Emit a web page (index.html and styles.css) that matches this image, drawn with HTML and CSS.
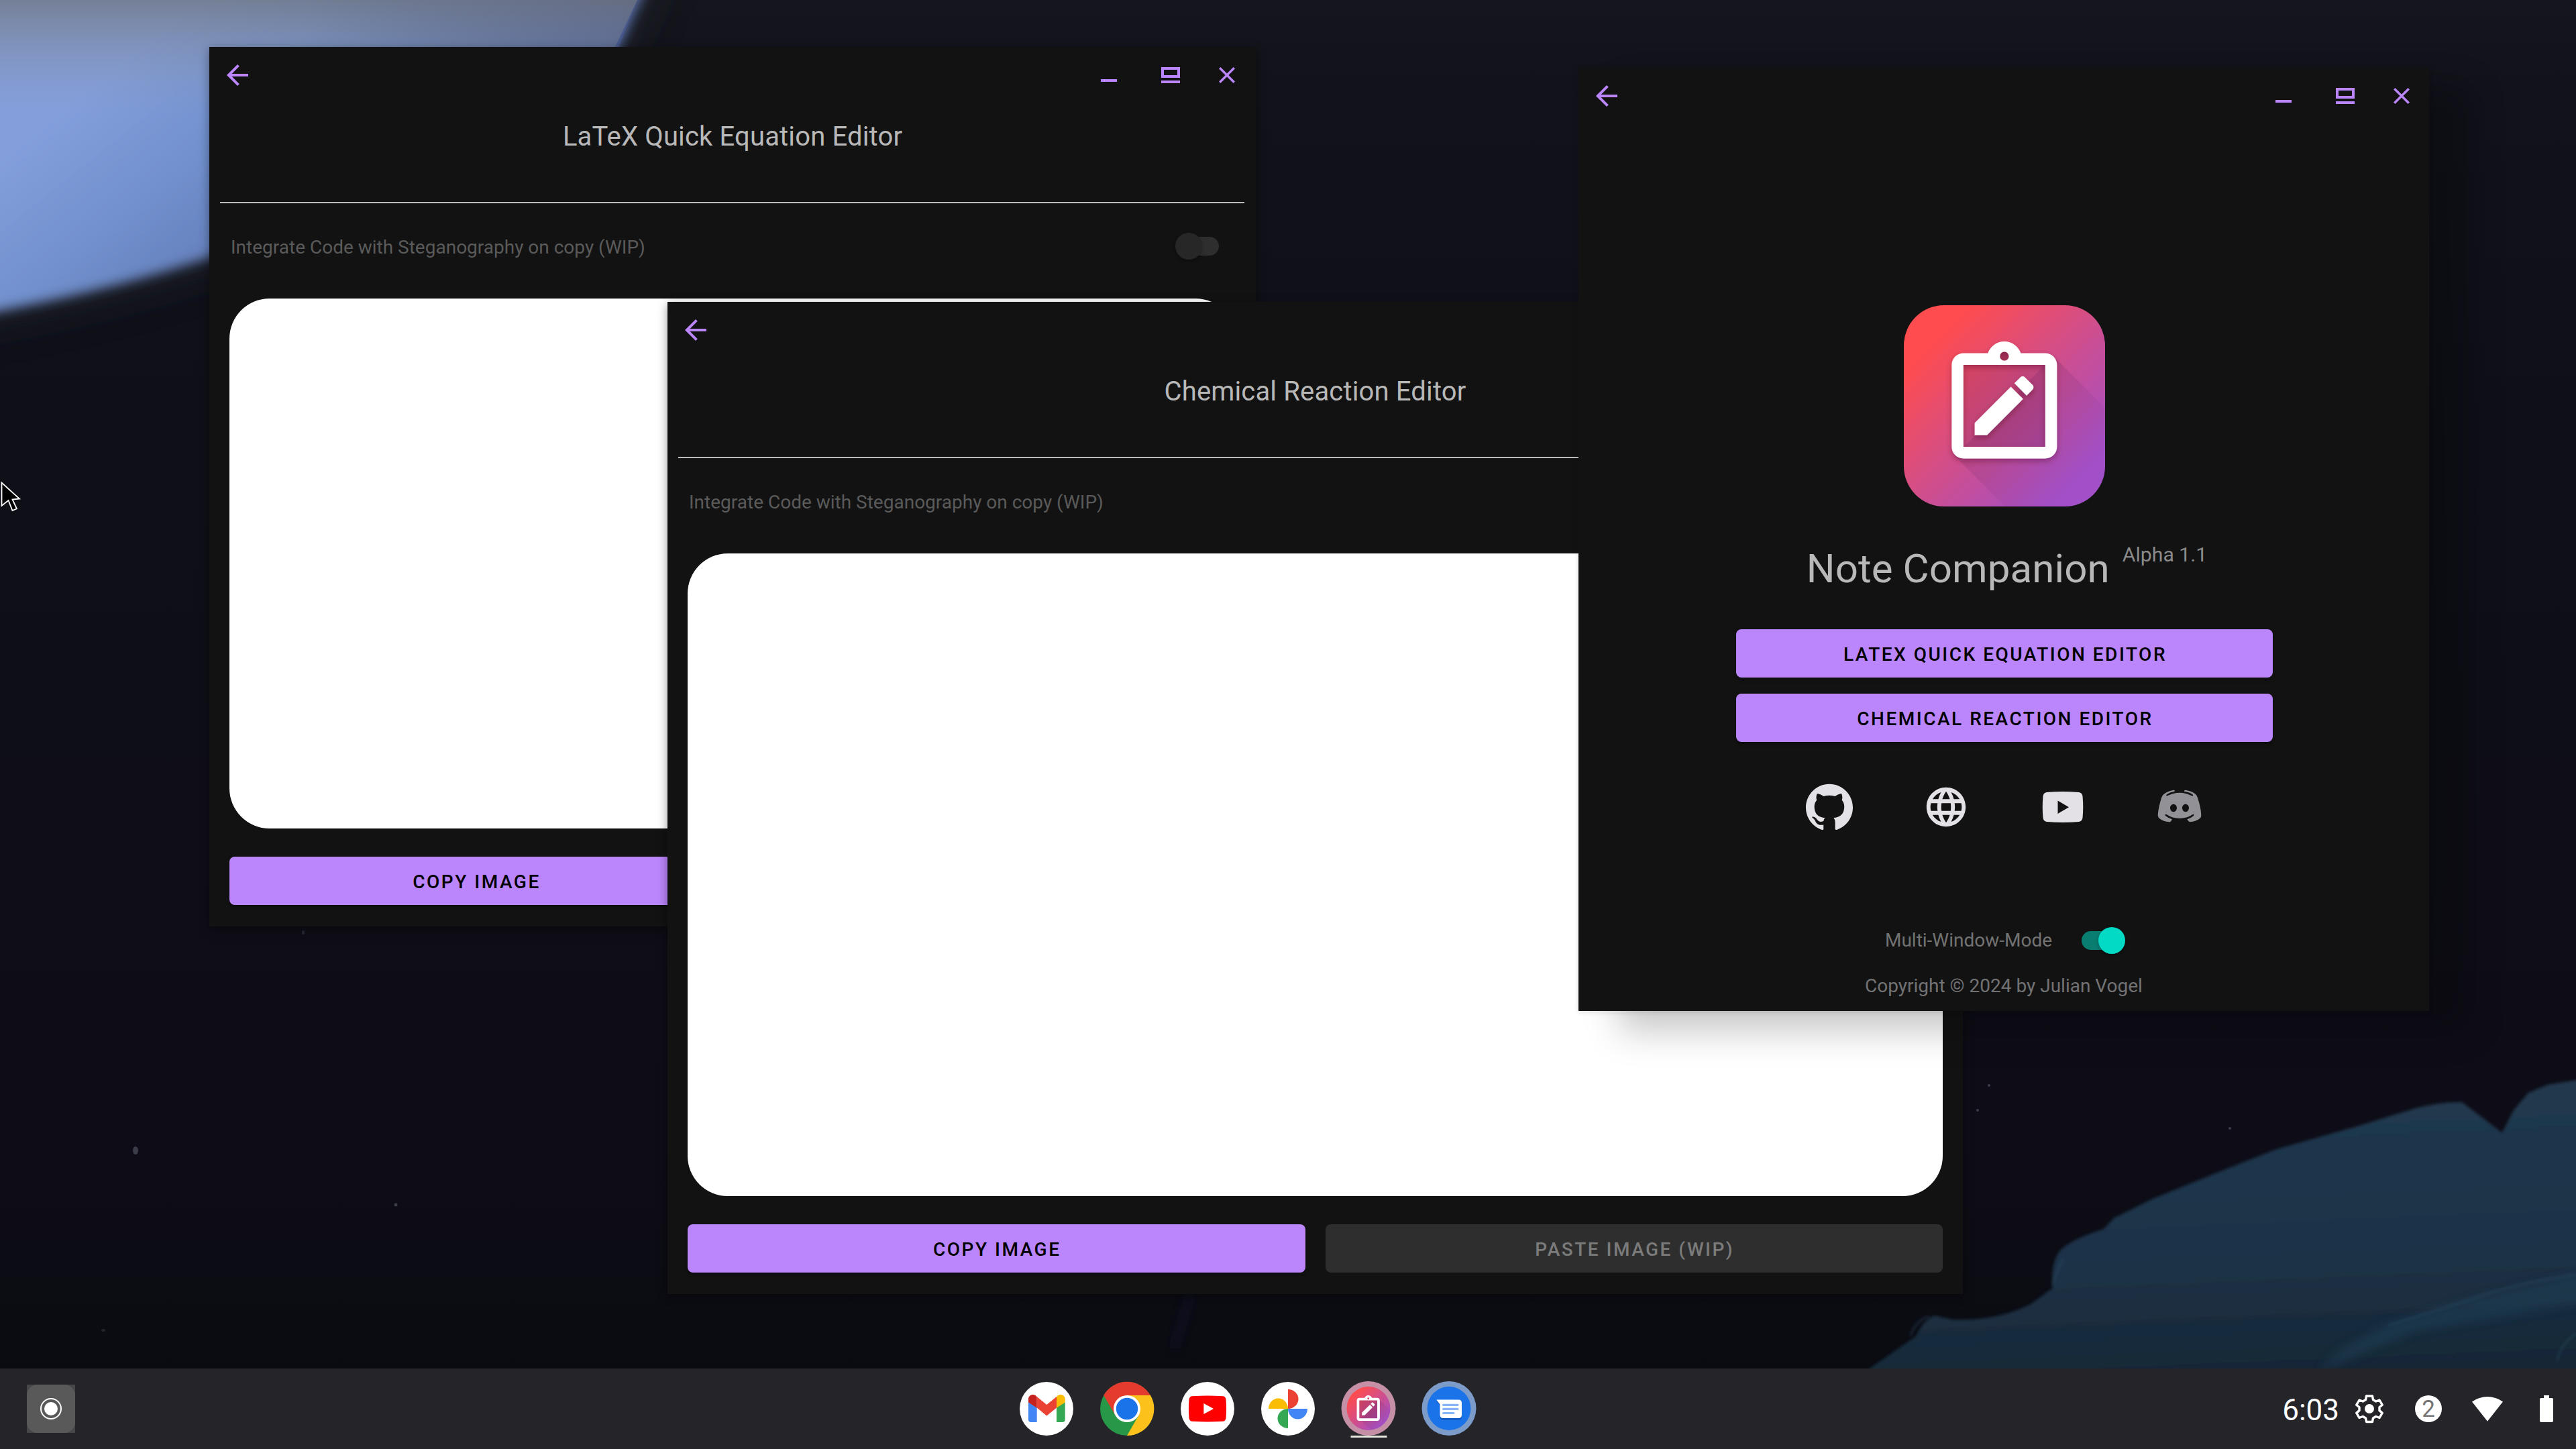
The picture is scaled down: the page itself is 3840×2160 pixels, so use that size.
FILE: index.html
```html
<!DOCTYPE html>
<html lang="en">
<head>
<meta charset="utf-8">
<title>Note Companion</title>
<link rel="stylesheet" href="styles.css">
</head>
<body>
<svg class="defs" width="0" height="0" aria-hidden="true">
  <defs>
    <linearGradient id="brand" x1="0" y1="0" x2="1" y2="1">
      <stop offset=".16" stop-color="#ff4c4e"/>
      <stop offset=".86" stop-color="#a250c8"/>
    </linearGradient>
    <linearGradient id="cast" x1="0" y1="0" x2="1" y2="1">
      <stop offset=".3" stop-color="#3c1450" stop-opacity=".15"/>
      <stop offset=".85" stop-color="#3c1450" stop-opacity="0"/>
    </linearGradient>
    <symbol id="back" viewBox="0 0 24 24"><path d="M20 11H7.83l5.59-5.59L12 4l-8 8 8 8 1.41-1.41L7.83 13H20v-2z"/></symbol>
    <symbol id="minimize" viewBox="0 0 48 48"><path d="M12 30h24v4H12z"/></symbol>
    <symbol id="maximize" viewBox="0 0 48 48"><path fill-rule="evenodd" d="M10 12h28v16H10zM14 16v8h20v-8zM10 32h28v4H10z"/></symbol>
    <symbol id="close" viewBox="0 0 28 28"><path d="M21 8.41 19.59 7 14 12.59 8.41 7 7 8.41 12.59 14 7 19.59 8.41 21 14 15.41 19.59 21 21 19.59 15.41 14z"/></symbol>
    <symbol id="clipboard" viewBox="0 0 24 24"><path fill-rule="evenodd" d="M19 3h-4.180C14.4 1.840 13.3 1 12 1S9.600 1.840 9.180 3H5c-1.100 0-2 .9-2 2v14c0 1.100.9 2 2 2h14c1.100 0 2-.9 2-2V5c0-1.100-.9-2-2-2zM12 2.750a.77.77 0 1 1 0 1.540.77.77 0 0 1 0-1.540zM19 19H5V5h14z"/></symbol>
    <symbol id="pencil" viewBox="0 0 24 24"><path d="M3 17.250V21h3.750L17.810 9.940l-3.750-3.750L3 17.250zM20.710 7.040c.39-.39.39-1.020 0-1.410l-2.340-2.340c-.39-.39-1.020-.39-1.410 0l-1.830 1.830 3.750 3.750 1.830-1.830z"/></symbol>
  </defs>
</svg>

<main class="desktop">
  <svg class="wallpaper" viewBox="0 0 3840 2160" aria-hidden="true">
    <defs>
      <linearGradient id="planet" gradientUnits="userSpaceOnUse" x1="100" y1="160" x2="420" y2="560">
        <stop offset="0" stop-color="#839edb"/>
        <stop offset=".35" stop-color="#7190cd"/>
        <stop offset="1" stop-color="#5468a4"/>
      </linearGradient>
      <linearGradient id="limb" gradientUnits="userSpaceOnUse" x1="450" y1="0" x2="960" y2="0">
        <stop offset="0" stop-color="#4c5f96" stop-opacity="0"/>
        <stop offset="1" stop-color="#46588e" stop-opacity=".85"/>
      </linearGradient>
      <linearGradient id="rock" x1=".4" y1="0" x2=".5" y2="1">
        <stop offset="0" stop-color="#21394f"/>
        <stop offset=".55" stop-color="#1d3349"/>
        <stop offset="1" stop-color="#172735"/>
      </linearGradient>
      <linearGradient id="haze" x1="0" y1="0" x2="0" y2="1">
        <stop offset="0" stop-color="#70747c" stop-opacity=".72"/>
        <stop offset="1" stop-color="#8a9ab8" stop-opacity="0"/>
      </linearGradient>
      <linearGradient id="sky" x1="0" y1="0" x2="0" y2="1">
        <stop offset="0" stop-color="#15161d"/>
        <stop offset=".06" stop-color="#11121a"/>
        <stop offset=".3" stop-color="#0f0f18"/>
        <stop offset=".8" stop-color="#0e0d17"/>
        <stop offset="1" stop-color="#090a0f"/>
      </linearGradient>
      <clipPath id="planet-clip"><path d="M0 0H955Q850 250 700 300Q500 330 312 384Q150 438 0 464z"/></clipPath>
      <filter id="soft" x="-10%" y="-10%" width="120%" height="120%"><feGaussianBlur stdDeviation="9"/></filter>
      <filter id="glow" x="-20%" y="-20%" width="140%" height="140%"><feGaussianBlur stdDeviation="30"/></filter>
      <filter id="edge"><feGaussianBlur stdDeviation="2"/></filter>
      <filter id="streak" x="-40%" y="-20%" width="180%" height="140%"><feGaussianBlur stdDeviation="7"/></filter>
    </defs>
    <rect width="3840" height="2160" fill="url(#sky)"/>
    <path d="M-90-90H1000Q890 250 700 316Q500 346 312 400Q150 454-90 494z" fill="#22262f" opacity=".7" filter="url(#glow)"/>
    <path d="M-60-60H982L945 20Q850 250 700 300Q500 330 312 384Q150 438-60 474z" fill="url(#planet)" filter="url(#soft)"/>
    <path d="M0 0H950L850 250H0z" fill="url(#limb)" clip-path="url(#planet-clip)"/>
    <path d="M0 0H950L870 170H0z" fill="url(#haze)" clip-path="url(#planet-clip)"/>
    <path filter="url(#edge)" fill="url(#rock)" d="M2787 2040L2856 1992Q2868 1966 2884 1961L2910 1967Q2976 1970 3027 1944L3060 1920Q3056 1890 3068 1868Q3080 1850 3136 1832L3151 1816L3209 1787L3318 1743L3391 1714L3514 1679L3601 1652Q3640 1642 3670 1643L3703 1668L3730 1689L3747 1655L3769 1629L3798 1617L3860 1607V2060H2780z"/>
    <path filter="url(#streak)" fill="#1f3a50" opacity=".7" d="M3456 2045L3490 2010L3558 1975L3620 1955L3703 1932L3860 1895V1940L3760 1958L3600 1985z"/>
    <path filter="url(#edge)" fill="none" stroke="#2b4f66" stroke-width="3" opacity=".45" d="M3060 1918Q3064 1898 3076 1876M2848 1992Q2854 1970 2876 1962M3560 1976Q3620 1958 3703 1930Q3760 1912 3840 1900M3812 2030Q3816 2004 3840 1988"/>
    <path filter="url(#streak)" stroke="#12153a" stroke-width="10" opacity=".45" d="M1775 1929L1750 2010"/>
    <g fill="#3a3d48">
      <ellipse cx="202" cy="1715" rx="4" ry="6"/><ellipse cx="452" cy="1390" rx="2" ry="3" opacity=".6"/>
      <ellipse cx="154" cy="1983" rx="3" ry="2" opacity=".5"/><circle cx="590" cy="1796" r="2.500"/>
      <circle cx="2965" cy="1618" r="2"/><circle cx="2948" cy="1655" r="2"/><circle cx="3324" cy="1682" r="2"/>
    </g>
  </svg>

  <section class="window window-latex">
    <header class="titlebar">
      <svg class="tool"><use href="#back"/></svg>
      <div class="controls">
        <svg class="tool"><use href="#minimize"/></svg>
        <svg class="tool maximize"><use href="#maximize"/></svg>
        <svg class="tool"><use href="#close"/></svg>
      </div>
    </header>
    <h1 class="editor-title">LaTeX Quick Equation Editor</h1>
    <hr class="divider">
    <div class="option">
      <span>Integrate Code with Steganography on copy (WIP)</span>
      <i class="switch off"></i>
    </div>
    <div class="canvas"></div>
    <div class="actions">
      <button class="btn">COPY IMAGE</button>
      <button class="btn disabled">PASTE IMAGE (WIP)</button>
    </div>
  </section>

  <section class="window window-chem">
    <header class="titlebar">
      <svg class="tool"><use href="#back"/></svg>
      <div class="controls">
        <svg class="tool"><use href="#minimize"/></svg>
        <svg class="tool maximize"><use href="#maximize"/></svg>
        <svg class="tool"><use href="#close"/></svg>
      </div>
    </header>
    <h1 class="editor-title">Chemical Reaction Editor</h1>
    <hr class="divider">
    <div class="option">
      <span>Integrate Code with Steganography on copy (WIP)</span>
      <i class="switch off"></i>
    </div>
    <div class="canvas"></div>
    <div class="actions">
      <button class="btn">COPY IMAGE</button>
      <button class="btn disabled">PASTE IMAGE (WIP)</button>
    </div>
  </section>

  <section class="window window-home">
    <header class="titlebar">
      <svg class="tool"><use href="#back"/></svg>
      <div class="controls">
        <svg class="tool"><use href="#minimize"/></svg>
        <svg class="tool maximize"><use href="#maximize"/></svg>
        <svg class="tool"><use href="#close"/></svg>
      </div>
    </header>
    <svg class="logo" viewBox="0 0 300 300">
      <defs>
        <clipPath id="tile"><rect width="300" height="300" rx="60"/></clipPath>
        <filter id="drop" x="-20%" y="-20%" width="140%" height="150%"><feDropShadow dx="0" dy="4" stdDeviation="4" flood-color="#400020" flood-opacity=".35"/></filter>
      </defs>
      <rect width="300" height="300" rx="60" fill="url(#brand)"/>
      <path clip-path="url(#tile)" d="M76 225L151 300H300V153L223 76z" fill="url(#cast)"/>
      <path d="M85 85H217V215H85z" fill="#5a1440" opacity=".15"/>
      <circle cx="150" cy="76" r="9" fill="#5a1440" opacity=".4"/>
      <g fill="#fff" filter="url(#drop)">
        <use href="#clipboard" x="45.200" y="45.300" width="209.300" height="209.300"/>
        <use href="#pencil" x="91" y="91.400" width="117" height="117"/>
      </g>
    </svg>
    <div class="brand"><h1 class="brand-name">Note Companion</h1><span class="version">Alpha 1.1</span></div>
    <nav class="menu">
      <button class="btn">LATEX QUICK EQUATION EDITOR</button>
      <button class="btn">CHEMICAL REACTION EDITOR</button>
    </nav>
    <div class="links">
      <svg viewBox="0 0 24 24"><path d="M12 .297c-6.630 0-12 5.373-12 12 0 5.303 3.438 9.800 8.205 11.385.6.113.82-.258.82-.577 0-.285-.01-1.040-.015-2.040-3.338.724-4.042-1.610-4.042-1.610C4.422 18.070 3.633 17.700 3.633 17.700c-1.087-.744.084-.729.084-.729 1.205.084 1.838 1.236 1.838 1.236 1.070 1.835 2.809 1.305 3.495.998.108-.776.417-1.305.76-1.605-2.665-.3-5.466-1.332-5.466-5.930 0-1.310.465-2.380 1.235-3.220-.135-.303-.54-1.523.105-3.176 0 0 1.005-.322 3.300 1.230.96-.267 1.980-.399 3-.405 1.020.006 2.040.138 3 .405 2.280-1.552 3.285-1.230 3.285-1.230.645 1.653.24 2.873.12 3.176.765.84 1.230 1.910 1.230 3.220 0 4.610-2.805 5.625-5.475 5.920.42.36.81 1.096.81 2.220 0 1.606-.015 2.896-.015 3.286 0 .315.21.69.825.57C20.565 22.092 24 17.592 24 12.297c0-6.627-5.373-12-12-12"/></svg>
      <svg viewBox="0 0 24 24"><path d="M11.990 2C6.470 2 2 6.480 2 12s4.470 10 9.990 10C17.520 22 22 17.520 22 12S17.520 2 11.990 2zm6.930 6h-2.950c-.32-1.250-.78-2.450-1.380-3.560 1.840.63 3.370 1.910 4.330 3.560zM12 4.040c.83 1.200 1.480 2.530 1.910 3.960h-3.820c.43-1.430 1.080-2.760 1.910-3.960zM4.260 14C4.100 13.360 4 12.690 4 12s.1-1.360.26-2h3.380c-.08.66-.14 1.320-.14 2s.06 1.340.14 2H4.260zm.82 2h2.950c.32 1.250.78 2.450 1.380 3.560-1.840-.63-3.370-1.900-4.330-3.560zm2.950-8H5.080c.96-1.660 2.490-2.930 4.330-3.560C8.810 5.550 8.350 6.750 8.030 8zM12 19.960c-.83-1.200-1.480-2.530-1.910-3.960h3.820c-.43 1.430-1.080 2.760-1.910 3.960zM14.340 14H9.660c-.09-.66-.16-1.320-.16-2s.07-1.350.16-2h4.680c.09.65.16 1.320.16 2s-.07 1.340-.16 2zm.25 5.560c.6-1.110 1.060-2.310 1.380-3.560h2.950c-.96 1.650-2.490 2.930-4.330 3.560zM16.360 14c.08-.66.14-1.320.14-2s-.06-1.340-.14-2h3.380c.16.64.26 1.310.26 2s-.1 1.360-.26 2h-3.380z"/></svg>
      <svg viewBox="0 0 70 70"><path fill-rule="evenodd" d="M11 13Q35 11 59 13Q64 14 64.500 19Q66 35 64.500 51Q64 56 59 57Q35 59 11 57Q6 56 5.500 51Q4 35 5.500 19Q6 14 11 13zM27.500 25.500V45L44 35.200z"/></svg>
      <svg class="muted" viewBox="42 24 210 210">
        <path fill-rule="evenodd" d="M92 79Q119 65 147 65Q176 65 202 79Q206 81 207 78Q208 75 205 73Q192 63 171 60Q166 59 168 56Q169 53 174 53Q202 57 219 72Q224 76 228 88Q243 134 244 165Q245 174 238 180Q219 195 193 196Q188 195 185 190L181 184Q197 180 209 169Q213 165 211 163Q209 160 205 163Q180 180 147 180Q115 180 90 163Q86 160 83 163Q81 166 85 169Q98 180 114 184L109 192Q106 197 100 196Q75 195 57 180Q50 174 50 165Q52 134 66 88Q70 77 76 72Q95 57 120 53Q126 53 126 56Q127 59 122 60Q104 63 90 73Q86 76 88 78Q89 80 92 79zM120 116c-8.500 0-15 7.500-15 17s6.500 18 15 18 15-8 15-18-6.500-17-15-17zM174 116c-8.500 0-15 7.500-15 17s6.500 18 15 18 15-8 15-18-6.500-17-15-17z"/>
      </svg>
    </div>
    <div class="multi"><span>Multi-Window-Mode</span><i class="switch on"></i></div>
    <p class="copyright">Copyright © 2024 by Julian Vogel</p>
  </section>

  <footer class="shelf">
    <div class="launcher"><i class="launcher-face"><svg viewBox="0 0 72 72"><circle cx="36" cy="36" r="15" fill="none" stroke="#fff" stroke-width="2"/><circle cx="36" cy="36" r="10" fill="#fff"/></svg></i></div>
    <div class="apps">
      <svg viewBox="0 0 80 80">
        <circle cx="40" cy="40" r="40" fill="#fff"/>
        <path d="M13 30L25.700 38V60H17q-4 0-4-4z" fill="#4285f4"/>
        <path d="M55 38L67.700 30V56q0 4-4 4H55z" fill="#34a853"/>
        <path d="M25.700 22L40.300 34L55 22V38.500L40.300 50.500L25.700 38.500z" fill="#ea4335"/>
        <path d="M13 30.500V25.500C13 20 19.500 17 24 20.600L25.700 22V38.800z" fill="#c5221f"/>
        <path d="M67.700 30.500V25.500C67.700 20 61 17 56.700 20.600L55 22V38.800z" fill="#fbbc04"/>
      </svg>
      <svg viewBox="0 0 80 80">
        <circle cx="40" cy="40" r="40" fill="#279847"/>
        <path d="M40 20H75A40 40 0 0 1 40 80L57.300 50L40 40z" fill="#fcc21b"/>
        <path d="M5.200 20A40 40 0 0 1 74.800 20H40V40L22.700 50z" fill="#e33b2e"/>
        <circle cx="40" cy="40" r="20" fill="#fff"/><circle cx="40" cy="40" r="16.200" fill="#1a73e8"/>
      </svg>
      <svg viewBox="0 0 80 80">
        <circle cx="40" cy="40" r="40" fill="#fff"/>
        <path d="M17 21.200Q40 20 63 21.200Q67 22 67.500 26Q68.700 40 67.500 54Q67 58 63 58.800Q40 60 17 58.800Q13 58 12.500 54Q11.300 40 12.500 26Q13 22 17 21.200z" fill="red"/>
        <path d="M34.400 32V48L49 40z" fill="#fff"/>
      </svg>
      <svg viewBox="0 0 80 80">
        <circle cx="40" cy="40" r="40" fill="#fff"/>
        <path d="M40 11A15.500 14.500 0 0 1 40 40z" fill="#ea4335"/><path d="M11 40A14.500 15.500 0 0 1 40 40z" fill="#fbbc04"/>
        <path d="M40 40H69A14.500 15.500 0 0 1 40 40z" fill="#4285f4"/><path d="M40 40V69A15.500 14.500 0 0 1 40 40z" fill="#34a853"/>
      </svg>
      <svg class="running" viewBox="0 0 80 84">
        <circle cx="40" cy="39.500" r="40.500" fill="#c590a6"/>
        <circle cx="40" cy="39.500" r="32.500" fill="url(#brand)"/>
        <path d="M27 56L43.500 71.500A32.500 32.500 0 0 0 72 42L56 26z" fill="url(#cast)"/>
        <path d="M26 25H54V54H26z" fill="#5a1440" opacity=".2"/>
        <use href="#clipboard" x="16.800" y="18" width="45.800" height="45.800" fill="#fff"/>
        <use href="#pencil" x="27" y="27.300" width="25.700" height="25.700" fill="#fff"/>
        <path d="M13.500 80H67.500V83H13.500z" fill="#e6e6e0"/>
      </svg>
      <svg viewBox="0 0 80 80">
        <circle cx="40" cy="39.500" r="40.500" fill="#7c9bc9"/>
        <circle cx="40" cy="39.500" r="32.500" fill="#1a73e8"/>
        <path d="M21.300 28.500H54q5 0 5 5V52q0 5-5 5H31.500q-5 0-5-5V35z" fill="#0d4fae" opacity=".6"/>
        <path d="M21.300 26.500H54q5 0 5 5V49q0 5-5 5H31.500q-5 0-5-5V33.500z" fill="#fff"/>
        <path d="M31.500 34.300H53M31.500 40.400H53M31.500 46.500H47" stroke="#8ab4f8" stroke-width="3.200" stroke-linecap="round"/>
      </svg>
    </div>
    <div class="status">
      <time class="clock">6:03</time>
      <svg viewBox="0 0 48 48"><path fill="none" stroke="#fff" stroke-width="3.400" stroke-linejoin="round" d="M19.500 5h9l1 5.500 4.200 2.500 5.300-2 4.300 7.300-4.300 3.500v4.800l4.300 3.600-4.300 7.300-5.300-2-4.200 2.400-1 5.600h-9l-1-5.600-4.200-2.400-5.300 2-4.300-7.300 4.300-3.600v-4.800l-4.300-3.500L9 11l5.300 2 4.200-2.500z"/><circle cx="24" cy="24" r="7" fill="#fff"/></svg>
      <span class="badge">2</span>
      <svg viewBox="0 0 48 48"><path fill="#fff" d="M24 42.700L1 13.500Q11.500 6 24 6T47 13.500z"/></svg>
      <svg viewBox="0 0 48 48"><path fill="#fff" d="M20 4h8v4h4q2 0 2 2V42q0 2-2 2H16q-2 0-2-2V10q0-2 2-2h4z"/></svg>
    </div>
  </footer>

  <svg class="pointer" viewBox="0 0 32 48" aria-hidden="true"><path d="M2.500 2.500V37L12.500 29L18.500 44L25 41.300L18.500 27.500L29 26.500z" fill="#000" stroke="#fff" stroke-width="1.800"/></svg>
</main>
</body>
</html>
```

FILE: styles.css
```css
* { box-sizing: border-box; }

body {
  margin: 0;
  background: #0f0f18;
  font-family: Roboto, "Liberation Sans", sans-serif;
}

h1, p, hr { margin: 0; font-weight: 400; }
svg { display: block; }
.defs { position: absolute; }

.desktop {
  position: relative;
  display: flex;
  flex-direction: column;
  justify-content: flex-end;
  width: 3840px;
  height: 2160px;
  overflow: hidden;
}

.wallpaper {
  position: absolute;
  inset: 0;
  width: 3840px;
  height: 2160px;
}

/* Windows */
.window {
  position: absolute;
  isolation: isolate;
  display: flex;
  flex-direction: column;
  background: #121212;
  box-shadow: 0 4px 14px rgba(0, 0, 0, .4);
}

.window-latex { left: 312px; top: 70px; width: 1560px; height: 1311px; }
.window-chem { left: 995px; top: 450px; width: 1931px; height: 1479px; }
.window-home {
  left: 2353px;
  top: 101px;
  width: 1268px;
  height: 1406px;
  align-items: center;
  box-shadow: 60px 30px 50px rgba(0, 0, 0, .22), 0 2px 8px rgba(0, 0, 0, .12);
}

.titlebar {
  display: flex;
  flex: none;
  align-items: center;
  justify-content: space-between;
  align-self: stretch;
  height: 84px;
  padding: 0 19px 0 18px;
}

.window-home .titlebar { padding-right: 17px; }

.controls { display: flex; }
.tool { width: 48px; height: 48px; fill: #bb86fc; }
.maximize { margin: 0 36px 0 44px; }

.editor-title {
  margin-top: 26px;
  color: #b8b8b8;
  font-size: 40px;
  letter-spacing: .15px;
  line-height: 48px;
  text-align: center;
}

.divider {
  flex: none;
  height: 2px;
  margin: 73px 17px 0 16px;
  border: 0;
  background: #bcbcbc;
}

.option {
  display: flex;
  flex: none;
  align-items: center;
  justify-content: space-between;
  height: 60px;
  margin: 34px 55px 48px 32px;
  color: #5a5a5a;
  font-size: 28px;
  line-height: 36px;
}

.option span { padding-top: 3px; }

.canvas {
  flex: 1;
  margin: 0 30px;
  border-radius: 60px;
  background: #fff;
}

.actions {
  display: grid;
  grid-template-columns: 1fr 1fr;
  gap: 30px;
  margin: 42px 30px 32px;
}

.btn {
  height: 72px;
  padding: 2px 0 0 2px;
  border: 0;
  border-radius: 8px;
  background: #bb86fc;
  box-shadow: 0 3px 5px rgba(0, 0, 0, .35);
  color: #000;
  font: 500 28px Roboto, "Liberation Sans", sans-serif;
  letter-spacing: 2.5px;
}

.btn.disabled {
  background: #2e2e2e;
  box-shadow: none;
  color: #7b7b7b;
}

/* Switches */
.switch {
  display: flex;
  flex: none;
  align-items: center;
  width: 65px;
  height: 40px;
}

.switch::before {
  content: "";
  width: 60px;
  height: 28px;
  border-radius: 14px;
}

.switch::after {
  content: "";
  flex: none;
  width: 40px;
  height: 40px;
  border-radius: 50%;
  box-shadow: 0 2px 4px rgba(0, 0, 0, .3);
}

.off { flex-direction: row-reverse; }
.off::before { margin-left: -35px; background: #2e2e2e; }
.off::after { background: #272727; z-index: 1; }
.on::before { margin-right: -35px; background: #0a7d71; }
.on::after { background: #03dac5; }

/* Home window */
.logo {
  flex: none;
  width: 300px;
  height: 300px;
  margin: 270px 0 0 2px;
}

.brand {
  display: flex;
  margin-top: 53px;
  padding-left: 9px;
  color: #b8b8b8;
}

.brand-name { font-size: 60px; letter-spacing: .1px; line-height: 80px; }

.version {
  margin-left: 19px;
  padding-top: 1px;
  color: #8b8b8b;
  font-size: 30.2px;
  line-height: 36px;
}

.menu {
  display: grid;
  gap: 24px;
  width: 800px;
  margin: 50px 0 0 2px;
}

.links {
  display: grid;
  grid-template-columns: repeat(4, 174px);
  justify-items: center;
  margin: 62px 0 0 1px;
  fill: #e4e1e6;
}

.links svg { width: 70px; height: 70px; }
.links .muted { fill: #929195; }

.multi {
  display: flex;
  align-items: center;
  gap: 44px;
  margin-top: 142px;
  padding-left: 4px;
  color: #727272;
  font-size: 28px;
  line-height: 44px;
}

.copyright {
  margin-top: 24px;
  color: #727274;
  font-size: 28px;
  line-height: 44px;
}

/* Shelf */
.shelf {
  position: relative;
  display: grid;
  grid-template-columns: 1480px auto 1fr;
  align-items: center;
  height: 120px;
  padding: 0 20px 0 40px;
  background: #252429;
}

.launcher { width: 72px; height: 72px; background: #464649; }

.launcher-face {
  display: block;
  border-radius: 16px;
  background: #595959;
}

.apps { display: flex; gap: 40px; height: 80px; }
.apps svg { width: 80px; height: 80px; overflow: visible; }
.apps .running { height: 84px; }

.status {
  display: flex;
  align-items: center;
  justify-content: flex-end;
  gap: 40px;
  color: #fff;
}

.status svg { width: 48px; height: 48px; }

.clock {
  margin-right: -19px;
  padding-top: 3px;
  font-size: 44px;
  line-height: 52px;
}

.badge {
  width: 40px;
  height: 40px;
  margin: 0 4px;
  border-radius: 50%;
  background: #fff;
  color: #757575;
  font-size: 35px;
  line-height: 42px;
  text-align: center;
}

.pointer {
  position: absolute;
  left: 0;
  top: 717px;
  width: 32px;
  height: 48px;
}
```
